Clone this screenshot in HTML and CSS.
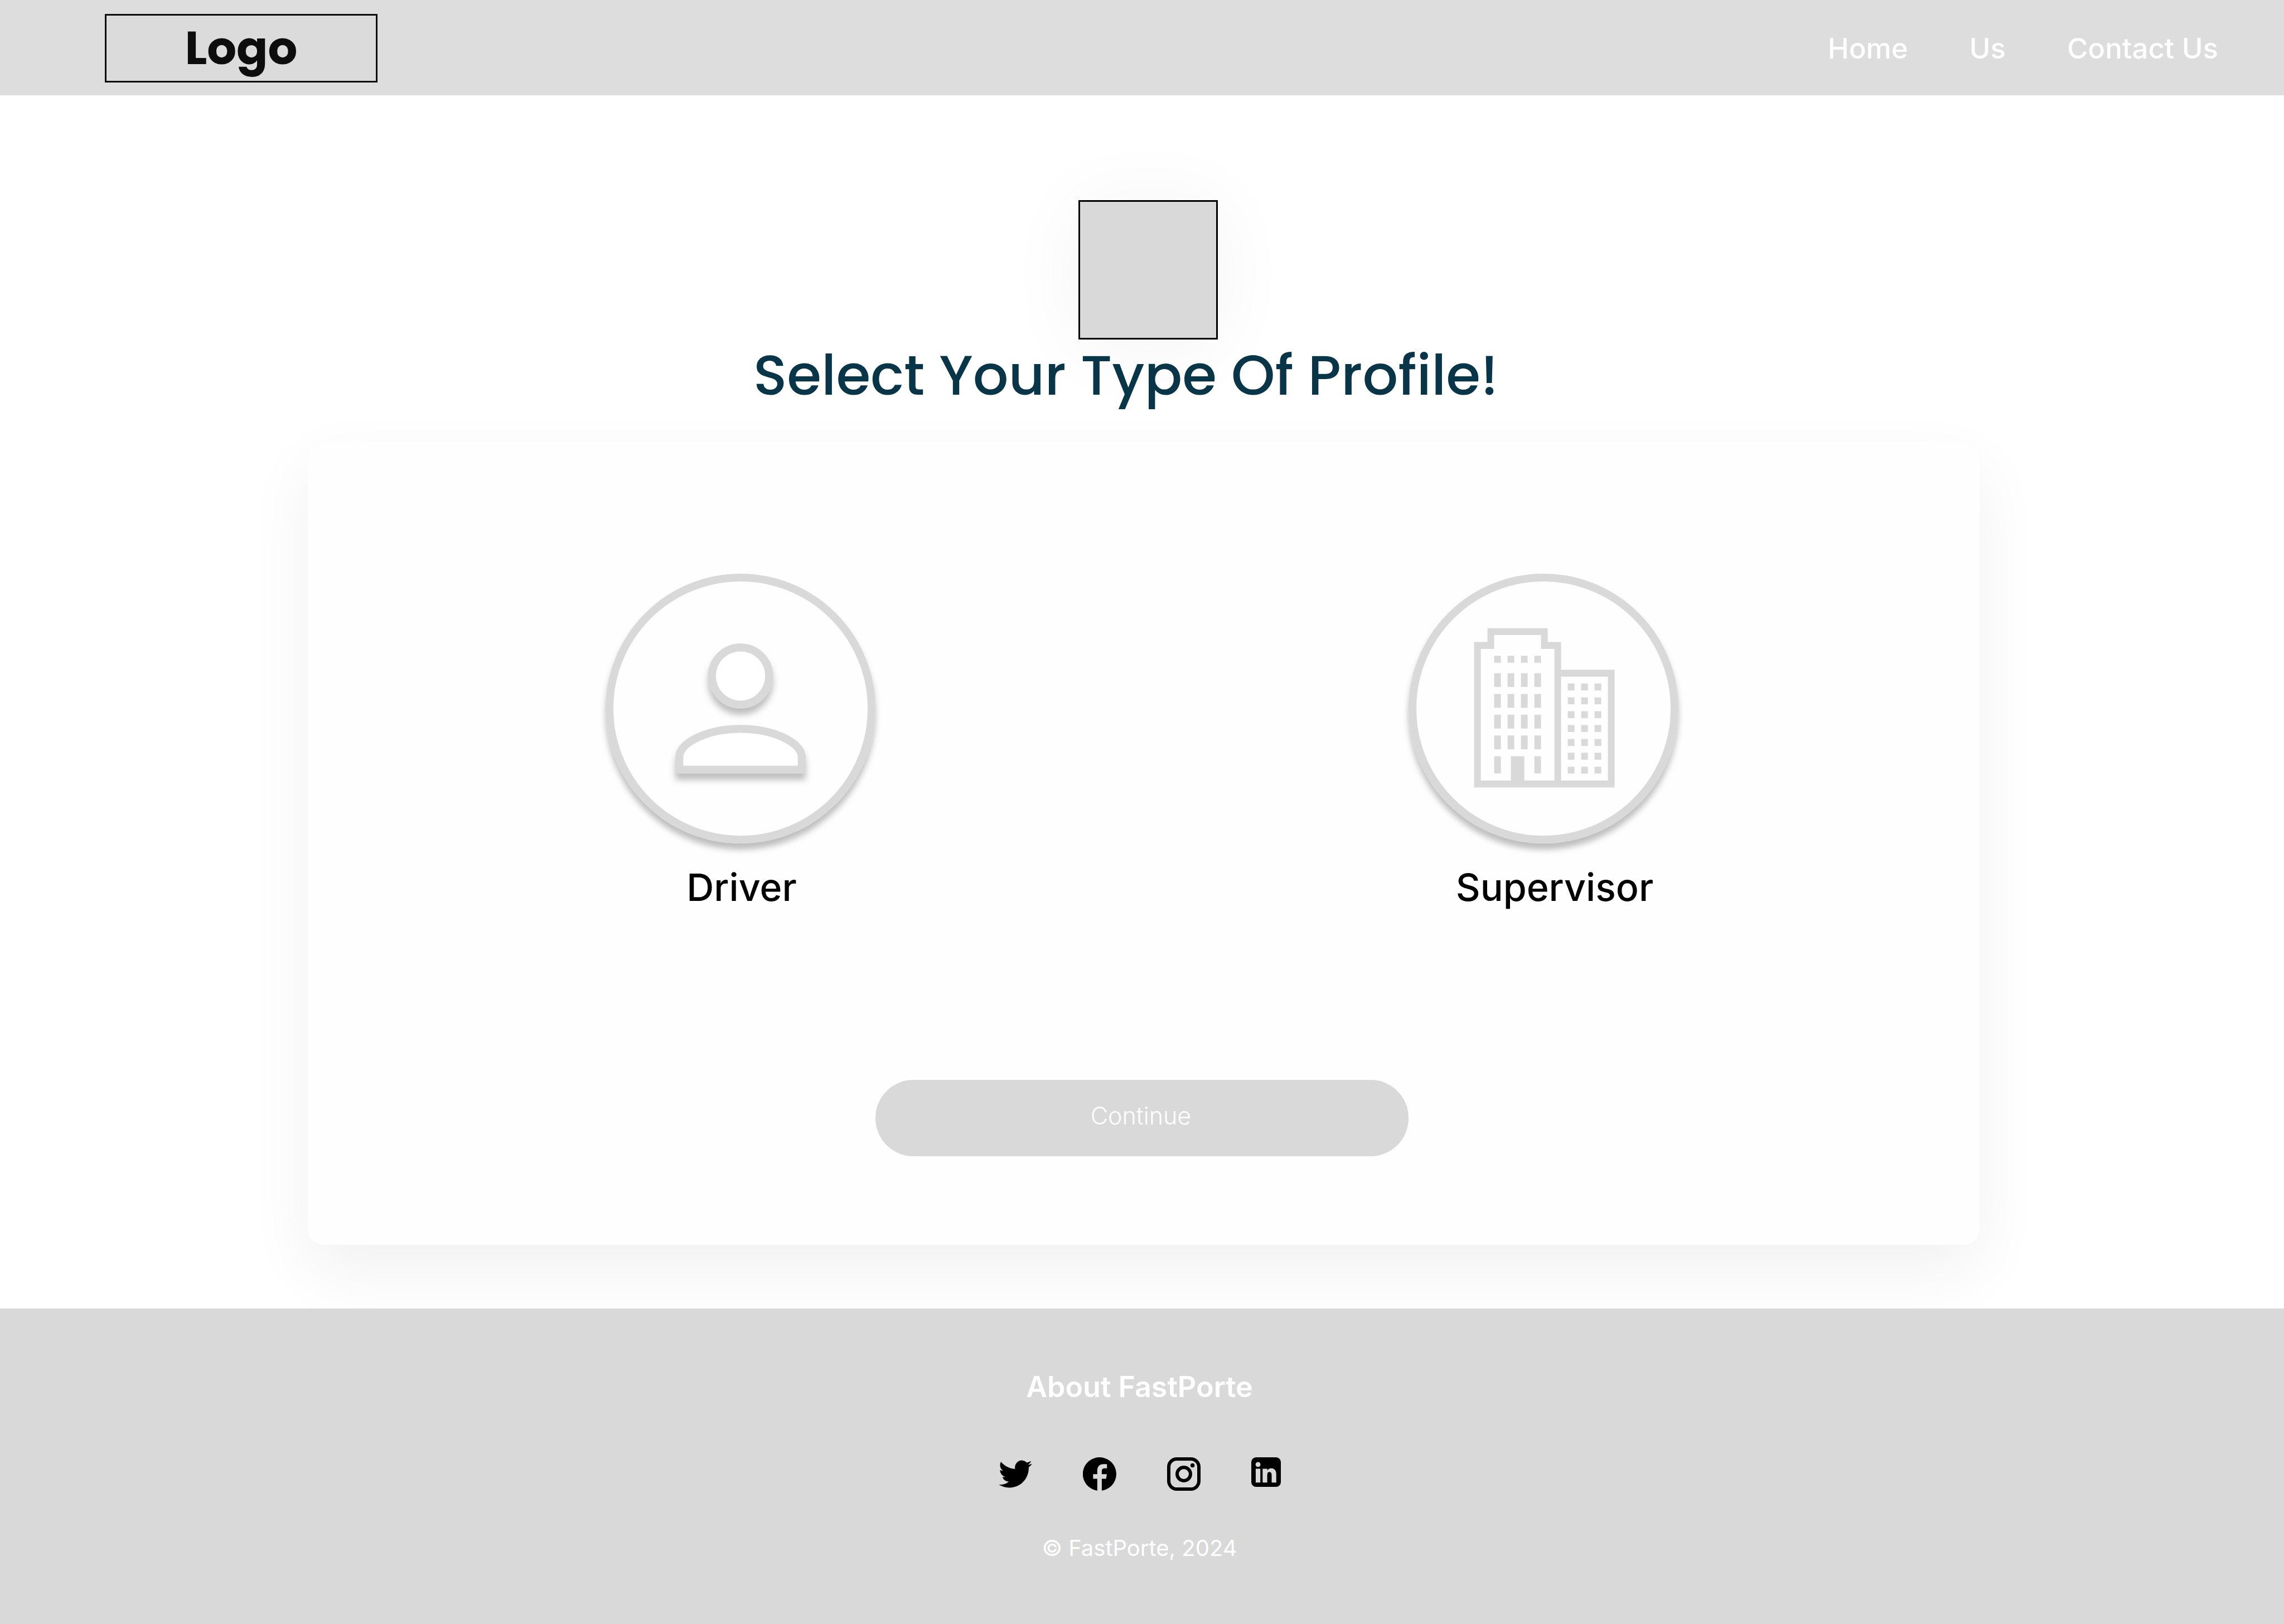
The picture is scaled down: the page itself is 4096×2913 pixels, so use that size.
FILE: index.html
```html
<!DOCTYPE html>
<html lang="en">
<head>
  <meta charset="utf-8">
  <title>FastPorte - Select your profile</title>
  <link rel="stylesheet" href="styles.css">
</head>
<body>
  <header class="site-header">
    <a class="logo" href="#">Logo</a>
    <nav class="site-nav">
      <a href="#">Home</a>
      <a href="#">Us</a>
      <a href="#">Contact Us</a>
    </nav>
  </header>

  <main class="main">
    <div class="picture"></div>
    <h1 class="title">Select Your Type Of Profile!</h1>

    <section class="card">
      <div class="profiles">
        <button class="profile" type="button">
          <span class="profile-ring">
            <svg class="profile-icon profile-icon-raised" viewBox="20 20 640 640" aria-hidden="true">
              <g fill="#fff" stroke="#d9d9d9" stroke-width="20">
                <circle cx="340" cy="258" r="72"/>
                <path d="M186 494V462C186 424 260 391 340 391S494 424 494 462V494Z"/>
              </g>
            </svg>
          </span>
          <span class="profile-name">Driver</span>
        </button>
        <button class="profile" type="button">
          <span class="profile-ring">
            <svg class="profile-icon" viewBox="20 20 640 640" aria-hidden="true">
              <g transform="matrix(16.84 0 0 17.44 165.4 137.4)" fill="#d9d9d9">
                <path fill-rule="evenodd" d="M2 0H11V2H13V6H21V23H0V2H2ZM3 1V3H1V22H5.500V18.500H7.500V22H12V3H10V1ZM13 7V22H20V7Z"/>
                <path d="M3 4h1v1h-1zM5 4h1v1h-1zM7 4h1v1h-1zM9 4h1v1h-1z"/>
                <path d="M3 6.500h1v2h-1zM5 6.500h1v2h-1zM7 6.500h1v2h-1zM9 6.500h1v2h-1z"/>
                <path d="M3 9.500h1v2h-1zM5 9.500h1v2h-1zM7 9.500h1v2h-1zM9 9.500h1v2h-1z"/>
                <path d="M3 12.500h1v2h-1zM5 12.500h1v2h-1zM7 12.500h1v2h-1zM9 12.500h1v2h-1z"/>
                <path d="M3 15.500h1v2h-1zM5 15.500h1v2h-1zM7 15.500h1v2h-1zM9 15.500h1v2h-1z"/>
                <path d="M3 18.500h1v2.500h-1zM9 18.500h1v2.500h-1z"/>
                <path d="M14 8h1v1h-1zM16 8h1v1h-1zM18 8h1v1h-1zM14 10h1v1h-1zM16 10h1v1h-1zM18 10h1v1h-1z"/>
                <path d="M14 12h1v1h-1zM16 12h1v1h-1zM18 12h1v1h-1zM14 14h1v1h-1zM16 14h1v1h-1zM18 14h1v1h-1z"/>
                <path d="M14 16h1v1h-1zM16 16h1v1h-1zM18 16h1v1h-1zM14 18h1v1h-1zM16 18h1v1h-1zM18 18h1v1h-1z"/>
                <path d="M14 20h1v1h-1zM16 20h1v1h-1zM18 20h1v1h-1z"/>
              </g>
            </svg>
          </span>
          <span class="profile-name profile-name-wide">Supervisor</span>
        </button>
      </div>
      <button class="continue" type="submit">Continue</button>
    </section>
  </main>

  <footer class="site-footer">
    <h2 class="footer-title">About FastPorte</h2>
    <div class="social">
      <a href="#" aria-label="Twitter">
        <svg class="social-icon" viewBox="0 0 24 24"><path d="M23.953 4.57a10 10 0 01-2.825.775 4.958 4.958 0 002.163-2.723c-.951.555-2.005.959-3.127 1.184a4.92 4.92 0 00-8.384 4.482C7.69 8.095 4.067 6.130 1.640 3.162a4.822 4.822 0 00-.666 2.475c0 1.710.870 3.213 2.188 4.096a4.904 4.904 0 01-2.228-.616v.060a4.923 4.923 0 003.946 4.827 4.996 4.996 0 01-2.212.085 4.936 4.936 0 004.604 3.417 9.867 9.867 0 01-6.102 2.105c-.390 0-.779-.023-1.170-.067a13.995 13.995 0 007.557 2.209c9.053 0 13.998-7.496 13.998-13.985 0-.210 0-.420-.015-.630A9.935 9.935 0 0024 4.590z"/></svg>
      </a>
      <a href="#" aria-label="Facebook">
        <svg class="social-icon" viewBox="2 2 20 20"><path d="M13.300 21.900A10 10 0 1 0 10.600 21.900V14.800H8.100V12.100H10.600V10C10.600 7.500 12 6.100 14.200 6.100H16.400V8.600H15.100C13.700 8.600 13.300 9.300 13.300 10.200V12.100H16.300L15.900 14.800H13.300Z"/></svg>
      </a>
      <a href="#" aria-label="Instagram">
        <svg class="social-icon" viewBox="2 2 20 20"><g fill="none" stroke="#000" stroke-width="2"><rect x="3" y="3" width="18" height="18" rx="4.800"/><circle cx="12" cy="12" r="4"/></g><circle cx="17.200" cy="6.800" r="1.250"/></svg>
      </a>
      <a href="#" aria-label="LinkedIn">
        <svg class="social-icon social-icon-small" viewBox="3 3 18 18"><path fill-rule="evenodd" d="M5.900 3H18.100A2.900 2.900 0 0 1 21 5.900V18.100A2.900 2.900 0 0 1 18.100 21H5.900A2.900 2.900 0 0 1 3 18.100V5.900A2.900 2.900 0 0 1 5.900 3ZM7.100 5.850A1.500 1.500 0 1 0 7.100 8.850A1.500 1.500 0 1 0 7.100 5.850ZM5.700 10V18.400H8.500V10ZM9.900 10V18.400H12.700V14C12.700 12.600 13.100 11.900 14.050 11.900C15 11.900 15.400 12.600 15.400 13.800V18.400H18.200V13.300C18.200 10.900 17 9.700 15.200 9.700C14 9.700 13.100 10.300 12.700 11.100V10Z"/></svg>
      </a>
    </div>
    <p class="copyright">© FastPorte, 2024</p>
  </footer>
</body>
</html>
```
FILE: styles.css
```css
* {
  box-sizing: border-box;
}

body {
  margin: 0;
  min-height: 100vh;
  display: flex;
  flex-direction: column;
  background: #fff;
  font-family: Inter, "Liberation Sans", sans-serif;
}

a {
  color: inherit;
  text-decoration: none;
}

button {
  margin: 0;
  padding: 0;
  border: 0;
  background: none;
  font: inherit;
  color: inherit;
  cursor: pointer;
}

/* Header */

.site-header {
  display: flex;
  align-items: center;
  justify-content: space-between;
  padding: 25px 118px 23px 188px;
  background: #ddd;
}

.logo {
  width: 489px;
  border: 3px solid #0d0d0d;
  background: #dbdbdb;
  color: #0d0d0d;
  font-family: Poppins, Inter, sans-serif;
  font-size: 83px;
  font-weight: 700;
  line-height: 117px;
  text-align: center;
}

.site-nav {
  display: flex;
  gap: 110px;
  color: #fff;
  font-size: 51px;
  font-weight: 500;
  line-height: 60px;
}

/* Main */

.main {
  flex: 1;
  display: flex;
  flex-direction: column;
  align-items: center;
  padding: 188px 546px 114px 552px;
}

.picture {
  width: 250px;
  height: 250px;
  margin-left: 16px;
  border: 3px solid #000;
  background: #d9d9d9;
  box-shadow: 0 8px 140px rgba(0, 0, 0, 0.05);
}

.title {
  margin: 4px 0 60px;
  padding-right: 64px;
  color: #093549;
  font-family: Poppins, Inter, sans-serif;
  font-size: 100px;
  font-weight: 500;
  line-height: 120px;
}

.card {
  width: 100%;
  display: flex;
  flex-direction: column;
  align-items: center;
  padding: 236px 6px 159px 0;
  border-radius: 28px;
  background: #fefefe;
  box-shadow: 0 45px 120px rgba(0, 0, 0, 0.06);
}

.profiles {
  display: flex;
  gap: 956px;
  margin-bottom: 306px;
}

.profile {
  display: flex;
  flex-direction: column;
  gap: 38px;
}

.profile-ring {
  width: 484px;
  height: 484px;
  border: 14px solid #d9d9d9;
  border-radius: 50%;
  box-shadow: 0 11px 11px rgba(0, 0, 0, 0.25);
}

.profile-icon {
  display: block;
  width: 100%;
  height: 100%;
}

.profile-icon-raised {
  filter: drop-shadow(0 11px 6px rgba(0, 0, 0, 0.25));
}

.profile-name {
  padding-left: 4px;
  color: #000;
  font-size: 68px;
  font-weight: 500;
  line-height: 80px;
  text-align: center;
}

.profile-name-wide {
  padding-left: 40px;
}

.continue {
  width: 956px;
  padding: 34px 4px 43px 0;
  border-radius: 68px;
  background: #d9d9d9;
  color: #fff;
  font-size: 43px;
  font-weight: 300;
  line-height: 60px;
}

/* Footer */

.site-footer {
  display: flex;
  flex-direction: column;
  align-items: center;
  padding: 111px 9px 112px 0;
  background: #d9d9d9;
  color: #fff;
}

.footer-title {
  margin: 0 0 96px;
  font-size: 52px;
  font-weight: 600;
  line-height: 60px;
}

.social {
  display: flex;
  gap: 91px;
  margin-bottom: 79px;
}

.social-icon {
  display: block;
  width: 60px;
  height: 60px;
  fill: #000;
}

.social-icon-small {
  width: 53px;
  height: 53px;
}

.copyright {
  margin: 0;
  font-size: 40px;
  line-height: 48px;
}
```
